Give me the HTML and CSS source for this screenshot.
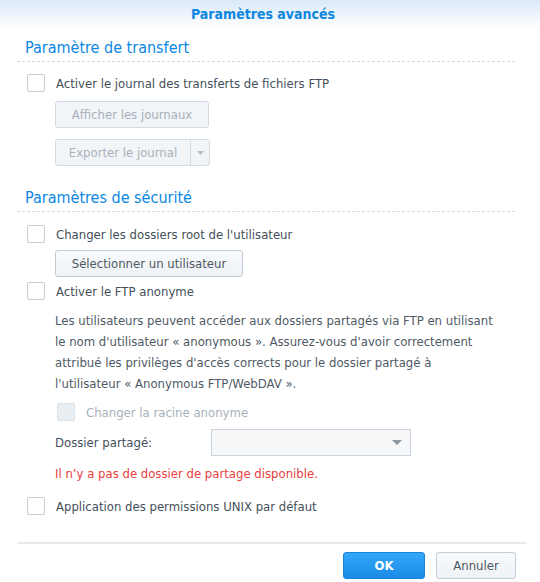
FILE: index.html
```html
<!DOCTYPE html>
<html lang="fr">
<head>
<meta charset="utf-8">
<title>Paramètres avancés</title>
<link rel="stylesheet" href="styles.css">
</head>
<body>
<div class="dialog">
  <div class="header">Paramètres avancés</div>
  <div class="content">
    <div class="section-title first">Paramètre de transfert</div>
    <label class="check-row r1"><span class="box"></span><span>Activer le journal des transferts de fichiers FTP</span></label>
    <div class="indent">
      <button class="btn disabled b1">Afficher les journaux</button>
      <div class="split disabled b2">
        <span class="split-main">Exporter le journal</span>
        <span class="split-arrow"><svg width="7" height="4" viewBox="0 0 7 4"><path d="M0 0h7L3.5 4z" fill="#b5bec7"/></svg></span>
      </div>
    </div>
    <div class="section-title second">Paramètres de sécurité</div>
    <label class="check-row r2"><span class="box"></span><span>Changer les dossiers root de l'utilisateur</span></label>
    <div class="indent">
      <button class="btn b3">Sélectionner un utilisateur</button>
    </div>
    <label class="check-row r3"><span class="box"></span><span>Activer le FTP anonyme</span></label>
    <div class="indent">
      <p class="desc">Les utilisateurs peuvent accéder aux dossiers partagés via FTP en utilisant<br>le nom d'utilisateur « anonymous ». Assurez-vous d'avoir correctement<br>attribué les privilèges d'accès corrects pour le dossier partagé à<br>l'utilisateur « Anonymous FTP/WebDAV ».</p>
      <label class="check-row sub disabled-row"><span class="box dis"></span><span>Changer la racine anonyme</span></label>
      <div class="field-row">
        <span class="field-label">Dossier partagé:</span>
        <div class="select"><svg width="10" height="5" viewBox="0 0 10 5"><path d="M0 0h10L5 5z" fill="#8b96a1"/></svg></div>
      </div>
      <div class="error">Il n’y a pas de dossier de partage disponible.</div>
    </div>
    <label class="check-row r4"><span class="box"></span><span>Application des permissions UNIX par défaut</span></label>
  </div>
  <div class="footer">
    <button class="btn primary">OK</button>
    <button class="btn cancel">Annuler</button>
  </div>
</div>
</body>
</html>
```

FILE: styles.css
```css
* { box-sizing: border-box; }
html, body { margin: 0; padding: 0; background: #fff; }
body {
  width: 540px;
  height: 582px;
  overflow: hidden;
  font-family: "DejaVu Sans Condensed", "DejaVu Sans", sans-serif;
  font-stretch: condensed;
  font-size: 13px;
  color: #454f59;
}
.header {
  height: 28px;
  line-height: 28px;
  text-align: center;
  font-weight: bold;
  font-size: 14px;
  padding-right: 14px;
  color: #0d86df;
  background: linear-gradient(to bottom, #dbeaf8 0%, #eef5fc 55%, #ffffff 100%);
}
.content {
  padding: 0 23px 0 17px;
}
.section-title {
  font-size: 16px;
  line-height: 20px;
  height: 24px;
  color: #0b87e3;
  padding-left: 8px;
  background-image: linear-gradient(to right, #d3dae1 60%, transparent 60%);
  background-size: 5px 1px;
  background-repeat: repeat-x;
  background-position: 0 23px;
}
.section-title.first { margin-top: 10px; }
.section-title.second { margin-top: 22px; }
.check-row {
  display: flex;
  align-items: center;
  height: 18px;
  padding-left: 10px;
  gap: 11px;
}
.box {
  width: 18px;
  height: 18px;
  border: 1px solid #c5cdd6;
  border-radius: 2px;
  background: #fff;
  flex: none;
}
.box.dis { background: #e9eef3; border-color: #dde3e9; }
.r1 { margin-top: 12px; }
.r2 { margin-top: 13px; }
.r3 { margin-top: 5px; }
.r4 { margin-top: 14px; }
.indent { padding-left: 38px; }
.btn {
  display: inline-flex;
  align-items: center;
  justify-content: center;
  height: 27px;
  padding: 0 10px;
  font-family: inherit;
  font-stretch: condensed;
  font-size: 13px;
  color: #4d5863;
  background: linear-gradient(to bottom, #f8fafc, #eef2f6);
  border: 1px solid #c4cdd6;
  border-radius: 3px;
}
.btn.disabled {
  color: #a7b1bb;
  background: #f2f5f8;
  border-color: #d2dae2;
}
.b1 { display: flex; width: 154px; margin-top: 9px; }
.split {
  display: flex;
  width: 155px;
  height: 27px;
  margin-top: 11px;
  border: 1px solid #d2dae2;
  border-radius: 3px;
  background: #f2f5f8;
  color: #a7b1bb;
}
.split-main {
  flex: 1;
  display: flex;
  align-items: center;
  justify-content: center;
  border-right: 1px solid #d2dae2;
}
.split-arrow {
  width: 18px;
  display: flex;
  align-items: center;
  justify-content: center;
}
.b3 { display: flex; width: 188px; margin-top: 7px; }
.desc {
  margin: 10px 0 0;
  line-height: 21px;
  color: #4f5a65;
  white-space: nowrap;
}
.check-row.sub { padding-left: 2px; margin-top: 9px; }
.disabled-row { color: #a7b1bb; }
.field-row {
  display: flex;
  align-items: center;
  margin-top: 8px;
  height: 27px;
}
.field-label { width: 156px; }
.select {
  width: 200px;
  height: 27px;
  border: 1px solid #c8d3de;
  background: #f5f7f9;
  display: flex;
  align-items: center;
  justify-content: flex-end;
  padding-right: 8px;
}
.error {
  margin-top: 9px;
  line-height: 18px;
  color: #e8403f;
}
.footer {
  margin: 27px 13px 0 17px;
  border-top: 2px solid #e6eaee;
  padding-top: 8px;
  display: flex;
  justify-content: flex-end;
  gap: 11px;
  padding-right: 11px;
}
.primary {
  width: 82px;
  color: #fff;
  font-weight: bold;
  background: linear-gradient(to bottom, #33a7f8, #1a8ce6);
  border-color: #1a84d6;
}
.cancel { width: 80px; }
```
